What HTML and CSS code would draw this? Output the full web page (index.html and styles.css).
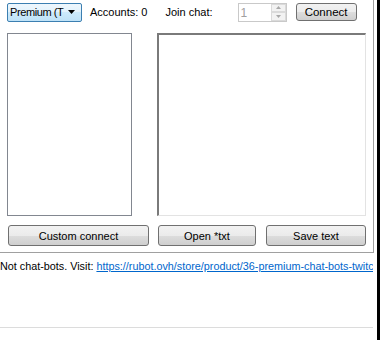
FILE: index.html
```html
<html>

<head>
    <title>Chat bots</title>
    <link rel="stylesheet" href="styles.css">
</head>

<body>
    <div class="window">
        <div class="panel">
            <div class="toolbar">
                <div class="combo">
                    <span class="combotext">Premium (T</span>
                    <svg width="8" height="4" viewBox="0 0 8 4"><path d="M0 0H7L3.5 4Z" fill="#000"/></svg>
                </div>
                <span class="accounts">Accounts: 0</span>
                <span class="join">Join chat:</span>
                <div class="spin">
                    <span class="spinvalue">1</span>
                    <div class="arrows">
                        <div class="arrow"><svg width="5" height="3" viewBox="0 0 5 3"><path d="M0 3H5L2.5 0Z" fill="#a8a8a8"/></svg></div>
                        <div class="arrow"><svg width="5" height="3" viewBox="0 0 5 3"><path d="M0 0H5L2.5 3Z" fill="#a8a8a8"/></svg></div>
                    </div>
                </div>
                <button class="btn connect">Connect</button>
            </div>
            <div class="boxes">
                <div class="listbox"></div>
                <div class="textbox"></div>
            </div>
            <div class="buttons">
                <button class="btn custom">Custom connect</button>
                <button class="btn open">Open *txt</button>
                <button class="btn save">Save text</button>
            </div>
        </div>
        <div class="status">Not chat-bots. Visit: <a href="#">https://rubot.ovh/store/product/36-premium-chat-bots-twitc</a></div>
        <div class="footer"></div>
    </div>
</body>

</html>
```

FILE: styles.css
```css
body {
    margin: 0;
    background: #fff;
    font-family: "Liberation Sans", Arial, sans-serif;
    font-size: 11px;
    color: #000;
}

.window {
    width: 380px;
    height: 340px;
    border-right: 3px solid #000;
    box-sizing: border-box;
    position: relative;
}

.panel {
    width: 374px;
    height: 253px;
    border-right: 1px solid #a0a0a0;
    border-bottom: 1px solid #a0a0a0;
    box-sizing: border-box;
}

.toolbar {
    display: flex;
    align-items: center;
    height: 24px;
    padding-left: 7px;
    white-space: nowrap;
}

.combo {
    flex-shrink: 0;
    width: 75px;
    height: 19px;
    box-sizing: border-box;
    border: 1px solid #3c7fb1;
    border-radius: 2px;
    background: linear-gradient(#eef7fd 0%, #e2f2fc 50%, #cdeafb 50%, #bfe2f7 100%);
    display: flex;
    align-items: center;
    justify-content: space-between;
    padding: 0 5px 0 2px;
    font-size: 11px;
}

.combotext {
    letter-spacing: -0.4px;
}

.accounts {
    margin-left: 8px;
}

.join {
    margin-left: 18px;
}

.spin {
    flex-shrink: 0;
    margin-left: 25px;
    width: 49px;
    height: 19px;
    box-sizing: border-box;
    border: 1px solid #c9c9c9;
    background: #fff;
    display: flex;
    justify-content: space-between;
}

.spinvalue {
    color: #a0a0a0;
    padding: 2px 0 0 2px;
    font-size: 12px;
}

.arrows {
    width: 15px;
    display: flex;
    flex-direction: column;
}

.arrow {
    flex: 1;
    border: 1px solid #dadada;
    background: #f2f2f2;
    display: flex;
    align-items: center;
    justify-content: center;
}

.btn {
    height: 21px;
    border: 1px solid #707070;
    border-radius: 3px;
    background: linear-gradient(#f2f2f2 0%, #ebebeb 50%, #dddddd 50%, #cfcfcf 100%);
    font-family: "Liberation Sans", Arial, sans-serif;
    font-size: 11px;
    color: #000;
    padding: 0;
}

.connect {
    flex-shrink: 0;
    margin-left: 9px;
    width: 61px;
    height: 18px;
    font-size: 11.5px;
}

.boxes {
    display: flex;
    margin-top: 9px;
    padding-left: 7px;
    height: 183px;
}

.listbox {
    width: 125px;
    border: 1px solid #828790;
    box-sizing: border-box;
}

.textbox {
    margin-left: 25px;
    width: 209px;
    border: 1px solid #e3e3e3;
    border-top: 2px solid #7a7a7a;
    border-left: 2px solid #7a7a7a;
    box-sizing: border-box;
}

.buttons {
    display: flex;
    margin-top: 9px;
    padding-left: 8px;
}

.custom {
    width: 141px;
}

.open {
    margin-left: 9px;
    width: 98px;
}

.save {
    margin-left: 10px;
    width: 100px;
}

.status {
    width: 373px;
    margin-top: 7px;
    white-space: nowrap;
    overflow: hidden;
    font-size: 10.8px;
}

.status a {
    color: #0066cc;
}

.footer {
    position: absolute;
    top: 327px;
    left: 0;
    width: 373px;
    border-top: 1px solid #dcdcdc;
}
```
